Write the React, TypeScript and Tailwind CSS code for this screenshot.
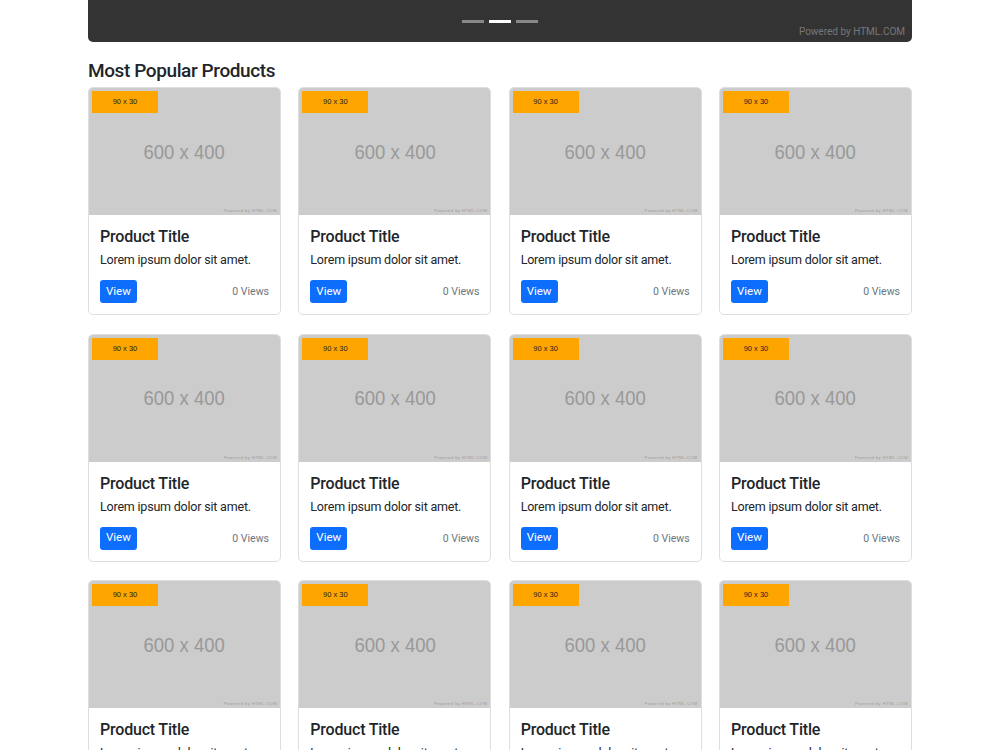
import React from 'react';

const products = Array.from({ length: 12 }, (_, i) => ({ id: i, title: 'Product Title', text: 'Lorem ipsum dolor sit amet.', views: 0 }));

function ProductCard({ title, text, views }: { title: string; text: string; views: number }) {
  return (
    <div className="overflow-hidden rounded-[5px] border border-[#dedede] bg-white">
      {/* placeholder image */}
      <div className="relative flex h-[127px] items-center justify-center bg-[#cccccc]">
        <div className="absolute left-[3px] top-[3px] flex h-[22px] w-[66px] items-center justify-center bg-[#ffa500] font-['Liberation_Sans',sans-serif] text-[7.5px] text-[#222]">
          90 x 30
        </div>
        <span className="scale-x-[0.88] font-['Liberation_Sans',sans-serif] text-[21px] text-[#999999]">600 x 400</span>
        <span className="absolute bottom-[1px] right-[3px] font-['Liberation_Sans',sans-serif] text-[4px] tracking-[0.5px] text-[#999]">
          Powered by HTML.COM
        </span>
      </div>
      <div className="px-[11px] pb-[11px] pt-[12px]">
        <h3 className="text-[16px] font-medium leading-[20px] tracking-[-0.2px] text-[#212529]">{title}</h3>
        <p className="mt-[4px] text-[12.5px] leading-[18px] tracking-[-0.2px] text-[#212529]">{text}</p>
        <div className="mt-[11px] flex h-[23px] items-center justify-between">
          <button className="h-[23px] rounded-[3px] bg-[#0d6efd] px-[6px] text-[11.5px] text-white">View</button>
          <span className="pt-[1px] text-[10.5px] text-[#6c757d]">{views} Views</span>
        </div>
      </div>
    </div>
  );
}

export default function App() {
  return (
    <div className="min-h-screen bg-white font-['Roboto',sans-serif]">
      <div className="mx-auto w-[824px]">
        <div className="relative h-[42px] rounded-b-[5px] bg-[#333333]">
          <div className="absolute left-1/2 top-[20px] flex -translate-x-1/2 gap-[5px]">
            <span className="block h-[3px] w-[22px] bg-[#888]" />
            <span className="block h-[3px] w-[22px] bg-white" />
            <span className="block h-[3px] w-[22px] bg-[#888]" />
          </div>
          <span className="absolute bottom-[3px] right-[7px] text-[10px] text-[#777]">Powered by HTML.COM</span>
        </div>

        <h2 className="mt-[17px] text-[19px] font-medium leading-[24px] tracking-[-0.4px] text-[#212529]">Most Popular Products</h2>

        <div className="mt-[4px] grid grid-cols-4 gap-x-[17.33px] gap-y-[18.5px]">
          {products.map((p) => (
            <ProductCard key={p.id} title={p.title} text={p.text} views={p.views} />
          ))}
        </div>
      </div>
    </div>
  );
}
